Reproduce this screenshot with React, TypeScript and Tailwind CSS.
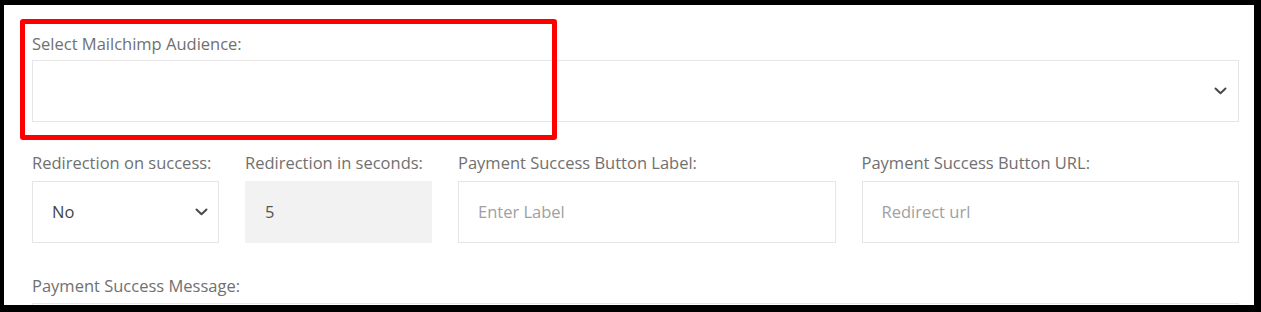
const labelCls = "block text-[16.5px] leading-[22px] text-[#707070] mb-[5px]";
const boxCls = "h-[62px] w-full border flex items-center px-[19px] text-[16.5px]";

function Chevron() {
  return (
    <svg width="13" height="8" viewBox="0 0 13 8" fill="none" className="shrink-0">
      <path d="M1.5 1.5 L6.5 6.3 L11.5 1.5" stroke="#4a4a4a" strokeWidth="2" strokeLinecap="round" strokeLinejoin="round" />
    </svg>
  );
}

export default function App() {
  return (
    <div
      className="relative h-[312px] w-[1261px] overflow-hidden bg-white border-t-[5px] border-l-[4px] border-r-[7px] border-b-[7px] border-black"
      style={{ fontFamily: '"Open Sans", "Noto Sans", sans-serif' }}
    >
      <div className="pt-[28px] pl-[28px] pr-[15px]">
        {/* Mailchimp audience */}
        <label className={labelCls}>Select Mailchimp Audience:</label>
        <div className={`${boxCls} border-[#e6e6e6] bg-white justify-end pr-[11px]`}>
          <Chevron />
        </div>

        {/* Redirect row */}
        <div className="mt-[30px] grid grid-cols-[187px_187px_1fr_1fr] gap-x-[26px]">
          <div>
            <label className={`${labelCls} mb-[7px]`}>Redirection on success:</label>
            <div className={`${boxCls} border-[#e6e6e6] bg-white justify-between pr-[10px] text-[#444]`}>
              <span>No</span>
              <Chevron />
            </div>
          </div>
          <div>
            <label className={`${labelCls} mb-[7px]`}>Redirection in seconds:</label>
            <div className={`${boxCls} bg-[#f2f2f2] border-[#f2f2f2] text-[#555]`}>5</div>
          </div>
          <div>
            <label className={`${labelCls} mb-[7px]`}>Payment Success Button Label:</label>
            <div className={`${boxCls} border-[#e6e6e6] bg-white text-[#a0a0a0]`}>Enter Label</div>
          </div>
          <div>
            <label className={`${labelCls} mb-[7px]`}>Payment Success Button URL:</label>
            <div className={`${boxCls} border-[#e6e6e6] bg-white text-[#a0a0a0]`}>Redirect url</div>
          </div>
        </div>

        {/* Message */}
        <div className="mt-[32px]">
          <label className={`${labelCls} mb-[6px]`}>Payment Success Message:</label>
          <div className={`${boxCls} border-[#e6e6e6] bg-white`} />
        </div>
      </div>

      {/* annotation highlight */}
      <div className="absolute left-[16px] top-[14px] h-[121px] w-[537px] rounded-[3px] border-[5px] border-[#ff0000]" />
    </div>
  );
}
